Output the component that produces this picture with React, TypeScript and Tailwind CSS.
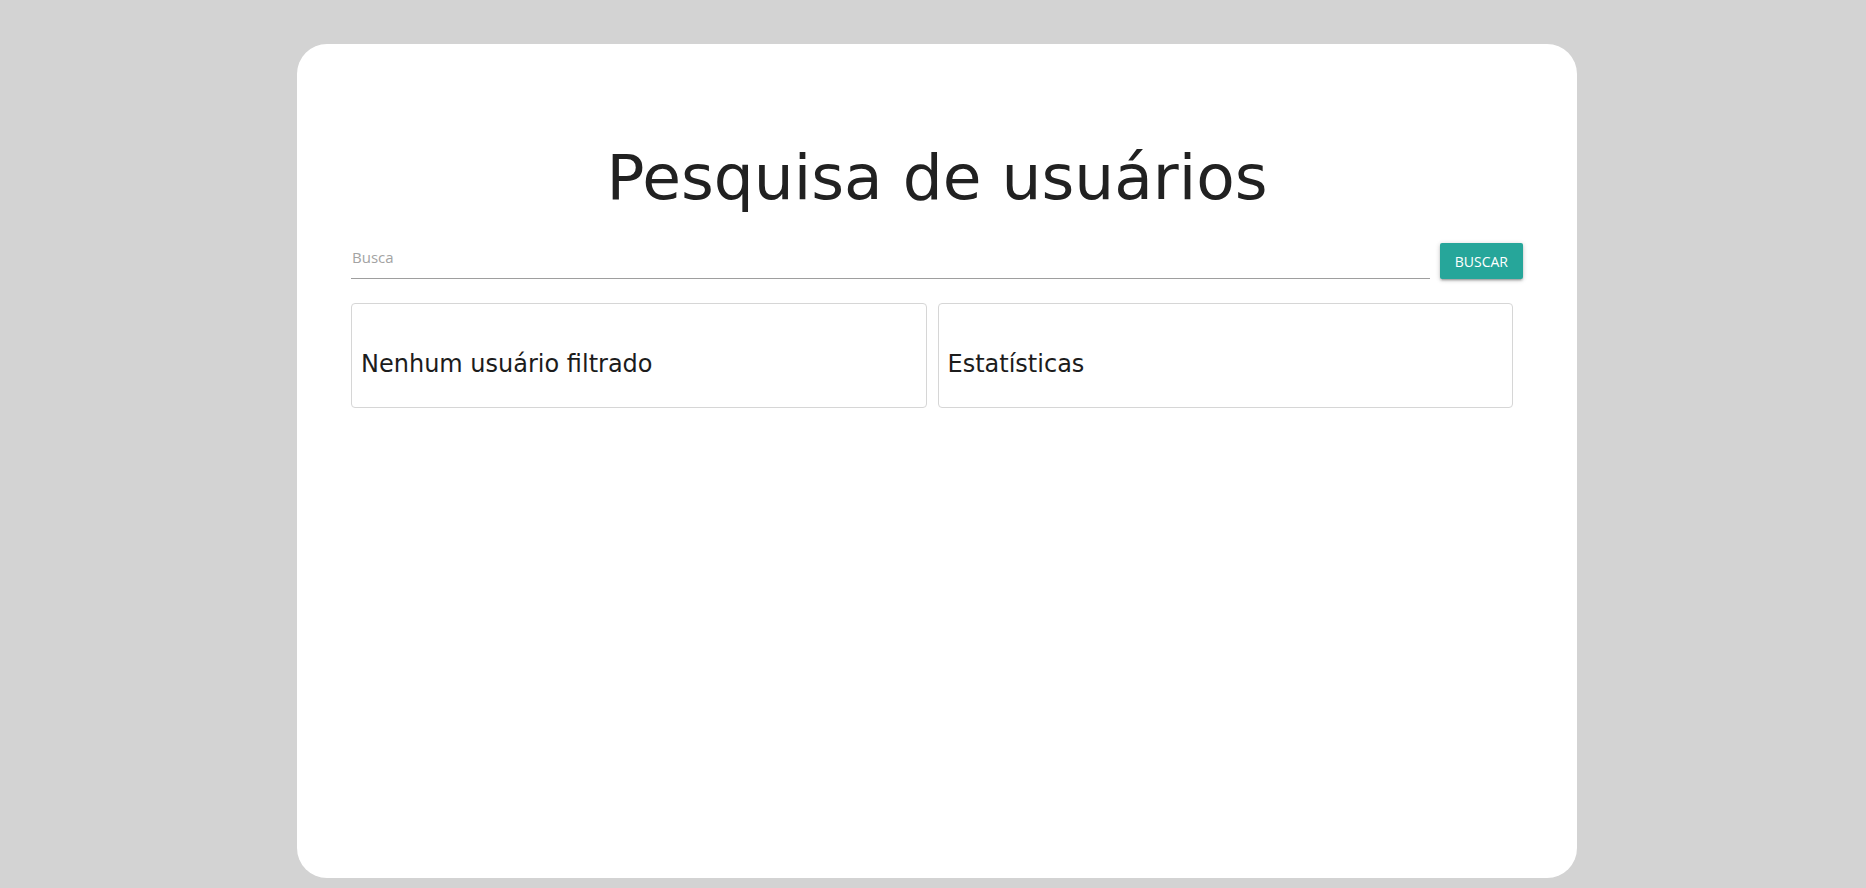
import React from 'react';

const panels = [
  { title: "Nenhum usuário filtrado" },
  { title: "Estatísticas" },
];

export default function App() {
  return (
    <div className="min-h-screen bg-[#d3d3d3] pl-[8px] pt-[44px] flex justify-center">
      <main className="w-[1280px] h-[834px] bg-white rounded-[30px] px-[54px] pt-[102px]">
        <h1
          className="text-center text-[63px] leading-[64px] text-[#212121]"
          style={{ fontFamily: '"DejaVu Sans", Verdana, sans-serif' }}
        >
          Pesquisa de usuários
        </h1>

        <div className="mt-[33px] flex items-end gap-[10px]">
          <input
            type="text"
            placeholder="Busca"
            className="flex-1 h-[36px] pb-[8px] pl-px border-b border-[#9e9e9e] outline-none text-[15px] text-[#212121] placeholder:text-[#a3a3a3]"
            style={{ fontFamily: '"Open Sans", sans-serif' }}
          />
          <button
            className="h-[36px] px-[15px] rounded-[2px] bg-[#26a69a] text-white text-[14px] shadow-[0_2px_2px_0_rgba(0,0,0,0.14),0_3px_1px_-2px_rgba(0,0,0,0.12),0_1px_5px_0_rgba(0,0,0,0.2)]"
            style={{ fontFamily: '"Open Sans", sans-serif' }}
          >
            BUSCAR
          </button>
        </div>

        <div className="mt-[24px] mr-[10px] grid grid-cols-2 gap-[11px]">
          {panels.map((p) => (
            <div
              key={p.title}
              className="h-[105px] border border-[#d6d6d6] rounded-[4px] pt-[46px] px-[9px]"
            >
              <h5
                className="text-[24px] leading-[28px] text-[#1c1c1c]"
                style={{ fontFamily: '"DejaVu Sans", Verdana, sans-serif' }}
              >
                {p.title}
              </h5>
            </div>
          ))}
        </div>
      </main>
    </div>
  );
}
